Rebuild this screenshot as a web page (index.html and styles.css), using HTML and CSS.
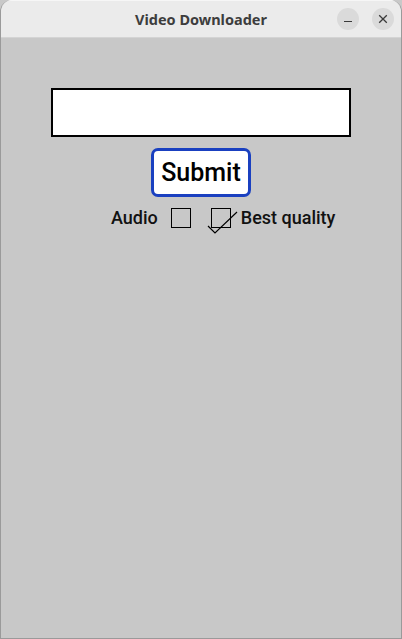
FILE: index.html
```html
<!DOCTYPE html>
<html>
<head>
<meta charset="utf-8">
<link rel="stylesheet" href="styles.css">
</head>
<body>
<div class="window">
  <header class="titlebar">
    <span class="spacer"></span>
    <span class="title">Video Downloader</span>
    <div class="controls">
      <span class="ctl"><svg width="10" height="10" viewBox="0 0 10 10"><path d="M1 7.5h8" stroke="#3a3a3a" stroke-width="1.2"/></svg></span>
      <span class="ctl"><svg width="10" height="10" viewBox="0 0 10 10"><path d="M1.2 1.2L8.8 8.8M8.8 1.2L1.2 8.8" stroke="#3a3a3a" stroke-width="1.3"/></svg></span>
    </div>
  </header>
  <main class="content">
    <div class="entry"></div>
    <button class="submit">Submit</button>
    <div class="options">
      <span class="label">Audio</span>
      <span class="box"></span>
      <span class="box checked"><svg class="tick" width="34" height="26" viewBox="0 0 34 26"><path d="M1 16L8 23L30 2" fill="none" stroke="#000" stroke-width="1.2"/></svg></span>
      <span class="label">Best quality</span>
    </div>
  </main>
</div>
</body>
</html>
```
FILE: styles.css
```css
html, body {
  margin: 0;
  padding: 0;
  background: #c8c8c8;
}
.window {
  width: 402px;
  height: 639px;
  box-sizing: border-box;
  border: 1px solid #9a9a9a;
  border-top: none;
  border-radius: 12px 12px 0 0;
  background: #c8c8c8;
  display: flex;
  flex-direction: column;
  overflow: hidden;
}
.titlebar {
  height: 37px;
  background: #ebebeb;
  border-bottom: 1px solid #d4d4d4;
  display: grid;
  grid-template-columns: 1fr auto 1fr;
  align-items: center;
  box-shadow: inset 0 1px 0 #f6f6f6;
}
.title {
  font-family: "Noto Sans", "DejaVu Sans", sans-serif;
  font-weight: 700;
  font-size: 14.5px;
  color: #3d3d3d;
  padding-top: 1px;
}
.controls {
  display: flex;
  justify-content: flex-end;
  gap: 13px;
  padding-right: 7px;
}
.ctl {
  width: 22px;
  height: 22px;
  border-radius: 50%;
  background: #dadada;
  display: flex;
  align-items: center;
  justify-content: center;
}
.content {
  flex: 1;
  display: flex;
  flex-direction: column;
  align-items: center;
  padding-top: 50px;
  font-family: Roboto, "Liberation Sans", sans-serif;
  color: #111;
}
.entry {
  width: 300px;
  height: 49px;
  box-sizing: border-box;
  border: 2px solid #000;
  background: #fff;
}
.submit {
  margin-top: 11px;
  width: 100px;
  height: 49px;
  box-sizing: border-box;
  border: 3px solid #1a40c0;
  border-radius: 7px;
  background: #fff;
  font-family: Roboto, "Liberation Sans", sans-serif;
  font-size: 25px;
  font-weight: 500;
  color: #000;
  padding: 0;
}
.options {
  align-self: flex-start;
  margin-left: 110px;
  margin-top: 11px;
  display: flex;
  align-items: center;
  height: 20px;
}
.label {
  font-size: 18px;
  font-weight: 500;
  line-height: 20px;
}
.box {
  width: 20px;
  height: 20px;
  box-sizing: border-box;
  border: 1px solid #000;
  margin-left: 13px;
  position: relative;
}
.box.checked {
  margin-left: 20px;
  margin-right: 10px;
}
.tick {
  position: absolute;
  left: -5px;
  top: 1px;
  overflow: visible;
}
```
